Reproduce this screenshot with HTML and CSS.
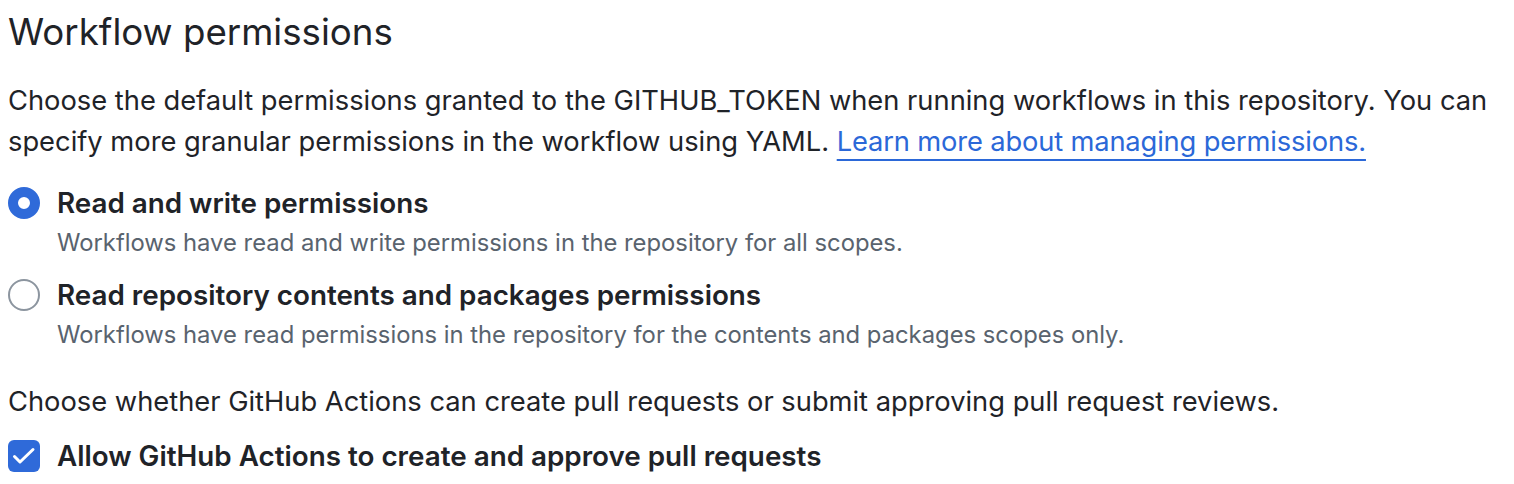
FILE: index.html
```html
<!DOCTYPE html>
<html>
<head>
<meta charset="utf-8">
<link rel="stylesheet" href="styles.css">
</head>
<body>
<section class="perm">
  <h2 class="title">Workflow permissions</h2>
  <p class="intro">Choose the default permissions granted to the GITHUB_TOKEN when running workflows in this repository. You can specify more granular permissions in the workflow using YAML. <a class="link" href="#">Learn more about managing permissions.</a></p>
  <div class="options">
    <label class="option">
      <span class="radio radio-on"></span>
      <span class="opt-text">
        <span class="opt-label">Read and write permissions</span>
        <span class="opt-desc">Workflows have read and write permissions in the repository for all scopes.</span>
      </span>
    </label>
    <label class="option">
      <span class="radio"></span>
      <span class="opt-text">
        <span class="opt-label">Read repository contents and packages permissions</span>
        <span class="opt-desc">Workflows have read permissions in the repository for the contents and packages scopes only.</span>
      </span>
    </label>
  </div>
  <p class="intro second">Choose whether GitHub Actions can create pull requests or submit approving pull request reviews.</p>
  <label class="option check-row">
    <span class="checkbox">
      <svg viewBox="0 0 32 32" width="32" height="32"><path d="M6.5 16.5l5.5 5.5L25 9.5" fill="none" stroke="#fff" stroke-width="3" stroke-linecap="round" stroke-linejoin="round"/></svg>
    </span>
    <span class="opt-text">
      <span class="opt-label">Allow GitHub Actions to create and approve pull requests</span>
    </span>
  </label>
</section>
</body>
</html>
```
FILE: styles.css
```css
body {
  margin: 8px;
  background: #ffffff;
  font-family: Inter, "Noto Sans", sans-serif;
  color: #1f2328;
}
.perm {
  display: flex;
  flex-direction: column;
}
.title {
  margin: 0;
  font-size: 36.7px;
  font-weight: 400;
  line-height: 48px;
  color: #1f2328;
}
.intro {
  margin: 24px 0 0 0;
  font-size: 27.3px;
  line-height: 41px;
}
.link {
  color: #2b68d8;
  text-decoration: underline;
  text-underline-offset: 8px;
  text-decoration-thickness: 2px;
  letter-spacing: -0.15px;
}
.options {
  display: flex;
  flex-direction: column;
  gap: 12px;
  margin-top: 24px;
}
.option {
  display: flex;
  align-items: flex-start;
  gap: 17px;
}
.radio {
  width: 32px;
  height: 32px;
  box-sizing: border-box;
  border-radius: 50%;
  border: 2px solid #8c959f;
  flex: none;
  margin-top: 1px;
}
.radio-on {
  border: 10px solid #2f6ad9;
}
.opt-text {
  display: flex;
  flex-direction: column;
}
.opt-label {
  font-size: 27.8px;
  font-weight: 600;
  line-height: 34px;
}
.opt-desc {
  font-size: 23.8px;
  line-height: 46px;
  color: #59636e;
}
.second {
  margin-top: 23px;
}
.check-row {
  margin-top: 17px;
}
.checkbox {
  width: 32px;
  height: 32px;
  border-radius: 6px;
  background: #2f6ad9;
  flex: none;
  display: flex;
  margin-top: 1px;
}
```
